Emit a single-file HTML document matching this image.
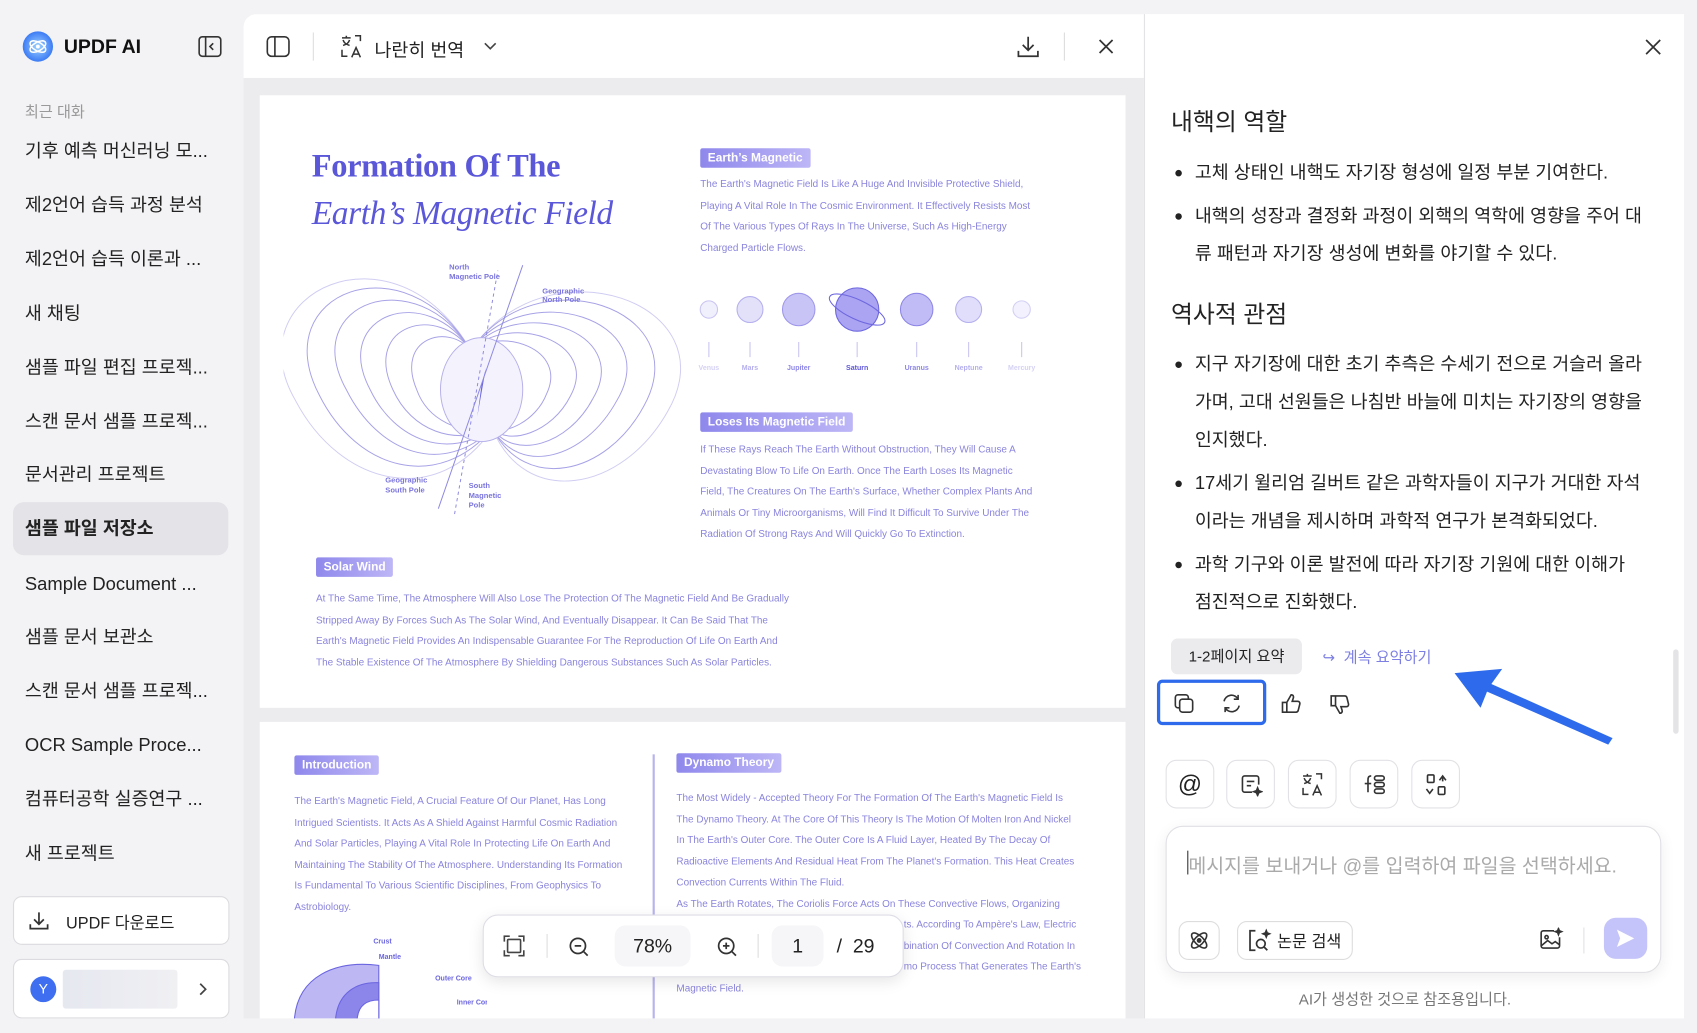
<!DOCTYPE html>
<html><head><meta charset="utf-8">
<style>
*{box-sizing:border-box;margin:0;padding:0}
html,body{width:1697px;height:1032px;overflow:hidden;background:#f3f3f5}
#w{position:absolute;left:0;top:0;width:1568px;height:954px;transform:scale(1.08227);transform-origin:0 0;font-family:"Liberation Sans","Noto Sans CJK KR",sans-serif;color:#222}
.a{position:absolute}
.side-item{position:absolute;left:23px;font-size:17px;color:#222;white-space:nowrap;line-height:20px}
.lbl{position:absolute;background:linear-gradient(90deg,#8f88ec,#bdb6f6);color:#fff;font-size:11px;font-weight:bold;padding:3px 7px;border-radius:2px;white-space:nowrap}
.para{position:absolute;font-size:9.2px;color:#8a84dc;line-height:19.5px;white-space:nowrap}
.rt{position:absolute;left:1082px;font-size:17px;color:#222;line-height:35px;white-space:nowrap}
.h{position:absolute;left:1082px;font-size:22px;color:#222;white-space:nowrap}
.bul{position:absolute;left:1086px;width:6px;height:6px;border-radius:50%;background:#222}
.tb{position:absolute;top:702px;width:45px;height:45px;border:1px solid #e2e2e6;border-radius:10px;background:#fff;display:flex;align-items:center;justify-content:center}
svg{display:block}
</style></head><body><div id="w">

<!-- sidebar -->
<div class="a" style="left:21px;top:29px;width:28px;height:28px;border-radius:50%;background:radial-gradient(circle,#9fd4ff,#3d7cf5 70%);"></div>
<svg class="a" style="left:25px;top:33px" width="20" height="20" viewBox="0 0 20 20"><ellipse cx="10" cy="10" rx="8" ry="4" fill="none" stroke="#fff" stroke-width="1.4" transform="rotate(30 10 10)"/><ellipse cx="10" cy="10" rx="8" ry="4" fill="none" stroke="#fff" stroke-width="1.4" transform="rotate(-30 10 10)"/><circle cx="10" cy="10" r="1.8" fill="#fff"/></svg>
<div class="a" style="left:59px;top:33px;font-size:18px;font-weight:bold;color:#111">UPDF AI</div>
<svg class="a" style="left:183px;top:33px" width="22" height="20" viewBox="0 0 22 20"><rect x="1" y="1" width="20" height="18" rx="3" fill="none" stroke="#333" stroke-width="1.5"/><line x1="7" y1="1" x2="7" y2="19" stroke="#333" stroke-width="1.5"/><path d="M14 7l-3 3 3 3" fill="none" stroke="#333" stroke-width="1.5"/></svg>
<div class="a" style="left:23px;top:93px;font-size:14px;color:#999">최근 대화</div>
<div class="side-item" style="top:130px">기후 예측 머신러닝 모...</div>
<div class="side-item" style="top:180px">제2언어 습득 과정 분석</div>
<div class="side-item" style="top:230px">제2언어 습득 이론과 ...</div>
<div class="side-item" style="top:280px">새 채팅</div>
<div class="side-item" style="top:330px">샘플 파일 편집 프로젝...</div>
<div class="side-item" style="top:380px">스캔 문서 샘플 프로젝...</div>
<div class="side-item" style="top:429px">문서관리 프로젝트</div>
<div class="a" style="left:12px;top:464px;width:199px;height:49px;border-radius:10px;background:#e4e4e8"></div>
<div class="side-item" style="top:479px;font-weight:bold">샘플 파일 저장소</div>
<div class="side-item" style="top:530px">Sample Document ...</div>
<div class="side-item" style="top:579px">샘플 문서 보관소</div>
<div class="side-item" style="top:629px">스캔 문서 샘플 프로젝...</div>
<div class="side-item" style="top:679px">OCR Sample Proce...</div>
<div class="side-item" style="top:729px">컴퓨터공학 실증연구 ...</div>
<div class="side-item" style="top:779px">새 프로젝트</div>
<div class="a" style="left:12px;top:828px;width:200px;height:45px;border:1px solid #dcdce0;border-radius:8px;background:#fff"></div>
<svg class="a" style="left:26px;top:841px" width="20" height="20" viewBox="0 0 20 20" fill="none" stroke="#333" stroke-width="1.6"><path d="M10 2v11M5.5 8.5L10 13l4.5-4.5M2 13v4h16v-4"/></svg>
<div class="a" style="left:61px;top:842px;font-size:15px;color:#222">UPDF 다운로드</div>
<div class="a" style="left:12px;top:886px;width:200px;height:55px;border:1px solid #dcdce0;border-radius:8px;background:#fff"></div>
<div class="a" style="left:28px;top:902px;width:24px;height:24px;border-radius:50%;background:#3f6ff0;color:#fff;font-size:13px;text-align:center;line-height:24px">Y</div>
<div class="a" style="left:58px;top:896px;width:106px;height:36px;background:linear-gradient(90deg,#e6e8f0,#f0f0f3);border-radius:3px"></div>
<svg class="a" style="left:181px;top:907px" width="12" height="14" viewBox="0 0 12 14"><path d="M4 2l5 5-5 5" fill="none" stroke="#444" stroke-width="1.6"/></svg>

<!-- main panel -->
<div class="a" style="left:225px;top:13px;width:832px;height:928px;background:#ececef;border-radius:12px 0 0 0;overflow:hidden">
  <div class="a" style="left:0;top:0;width:832px;height:59px;background:#fff"></div>
</div>
<svg class="a" style="left:246px;top:33px" width="22" height="20" viewBox="0 0 22 20"><rect x="1" y="1" width="20" height="18" rx="4" fill="none" stroke="#333" stroke-width="1.5"/><line x1="8" y1="1" x2="8" y2="19" stroke="#333" stroke-width="1.5"/></svg>
<div class="a" style="left:289px;top:30px;width:1px;height:26px;background:#ddd"></div>
<svg class="a" style="left:314px;top:31px" width="22" height="24" viewBox="0 0 22 24" fill="none" stroke="#333" stroke-width="1.4"><path d="M2 4h8M6 2v2M3 6c1 3 3 4 6 5M9 6c-1 3-3 4-6 5"/><path d="M14 2h5v5M2 15v6h5"/><path d="M11 22l4-9 4 9M12.5 19h5"/></svg>
<div class="a" style="left:346px;top:32px;font-size:17px;color:#222">나란히 번역</div>
<svg class="a" style="left:446px;top:38px" width="14" height="10" viewBox="0 0 14 10"><path d="M2 2l5 5 5-5" fill="none" stroke="#444" stroke-width="1.5"/></svg>
<svg class="a" style="left:939px;top:32px" width="22" height="22" viewBox="0 0 22 22" fill="none" stroke="#333" stroke-width="1.6"><path d="M11 2v12M6 9.5l5 5 5-5M2 15v5h18v-5"/></svg>
<div class="a" style="left:983px;top:30px;width:1px;height:26px;background:#ddd"></div>
<svg class="a" style="left:1014px;top:35px" width="16" height="16" viewBox="0 0 16 16"><path d="M2 2l12 12M14 2L2 14" stroke="#333" stroke-width="1.6"/></svg>

<!-- page 1 -->
<div class="a" style="left:240px;top:88px;width:800px;height:566px;background:#fff"></div>
<div class="a" style="left:288px;top:137px;font-family:'Liberation Serif',serif;font-weight:bold;font-size:30px;color:#5b57d9;white-space:nowrap;letter-spacing:-0.3px">Formation Of The</div>
<div class="a" style="left:288px;top:179px;font-family:'Liberation Serif',serif;font-style:italic;font-size:31px;color:#5b57d9;white-space:nowrap;letter-spacing:-0.4px">Earth’s Magnetic Field</div>
<svg class="a" style="left:262px;top:238px" width="370" height="240" viewBox="0 0 370 240" fill="none" stroke="#a7a2e6" stroke-width="0.9">
<g transform="translate(183,122)">
<path d="M-10-36C-80-160-230-90-172,10C-130,90-40,110,10,36" stroke="#d0cdf2"/>
<path d="M-10-36C-70-140-200-90-150,5C-115,75-40,95,10,36"/>
<path d="M-10-36C-60-120-170-80-125,0C-95,60-35,80,10,36"/>
<path d="M-10-36C-50-100-140-70-103,0C-80,48-30,65,10,36"/>
<path d="M-10-36C-40-80-110-60-82,0C-65,38-25,52,10,36"/>
<path d="M-10-36C-30-62-80-48-60,0C-50,28-20,42,10,36"/>
<path d="M-10-36C60-140,230-80,172,20C130,95,40,110,10,36" stroke="#d0cdf2"/>
<path d="M-10-36C50-125,200-75,150,15C115,80,40,95,10,36"/>
<path d="M-10-36C40-105,170-65,125,10C95,65,35,80,10,36"/>
<path d="M-10-36C32-88,140-55,103,8C80,52,30,65,10,36"/>
<path d="M-10-36C25-72,110-45,82,6C65,40,25,52,10,36"/>
<path d="M-10-36C18-58,80-38,60,4C50,30,20,42,10,36"/>
<ellipse cx="0" cy="0" rx="38" ry="48" fill="#f3f2fd" stroke="#b5b0ea"/>
<path d="M4-20L-4 25L0 -5Z" fill="#6b65e0" stroke="none"/>
<line x1="-40" y1="110" x2="38" y2="-115" stroke="#8d88e0"/>
<line x1="-25" y1="115" x2="15" y2="-110" stroke="#8d88e0" stroke-dasharray="3 3"/>
</g>
<text x="153" y="11" font-size="7" fill="#7b75dd" stroke="none" font-family="Liberation Sans" font-weight="bold">North</text>
<text x="153" y="20" font-size="7" fill="#7b75dd" stroke="none" font-family="Liberation Sans" font-weight="bold">Magnetic Pole</text>
<text x="239" y="33" font-size="7" fill="#7b75dd" stroke="none" font-family="Liberation Sans" font-weight="bold">Geographic</text>
<text x="239" y="41" font-size="7" fill="#7b75dd" stroke="none" font-family="Liberation Sans" font-weight="bold">North Pole</text>
<text x="94" y="208" font-size="7" fill="#7b75dd" stroke="none" font-family="Liberation Sans" font-weight="bold">Geographic</text>
<text x="94" y="217" font-size="7" fill="#7b75dd" stroke="none" font-family="Liberation Sans" font-weight="bold">South Pole</text>
<text x="171" y="213" font-size="7" fill="#7b75dd" stroke="none" font-family="Liberation Sans" font-weight="bold">South</text>
<text x="171" y="222" font-size="7" fill="#7b75dd" stroke="none" font-family="Liberation Sans" font-weight="bold">Magnetic</text>
<text x="171" y="231" font-size="7" fill="#7b75dd" stroke="none" font-family="Liberation Sans" font-weight="bold">Pole</text>
</svg>
<div class="lbl" style="left:647px;top:137px">Earth’s Magnetic</div>
<div class="para" style="left:647px;top:161px">The Earth's Magnetic Field Is Like A Huge And Invisible Protective Shield,<br>Playing A Vital Role In The Cosmic Environment. It Effectively Resists Most<br>Of The Various Types Of Rays In The Universe, Such As High-Energy<br>Charged Particle Flows.</div>
<svg class="a" style="left:640px;top:262px" width="330" height="90" viewBox="0 0 330 90" font-family="Liberation Sans" font-size="6.5" font-weight="bold">
<circle cx="15" cy="24" r="8" fill="#f0effc" stroke="#c9c5f2"/>
<circle cx="53" cy="24" r="12" fill="#e3e1fa" stroke="#b5b0ee"/>
<circle cx="98" cy="24" r="15" fill="#c8c4f6" stroke="#9f98ea"/>
<circle cx="152" cy="24" r="20" fill="#aaa4f2" stroke="#6e67df"/>
<ellipse cx="152" cy="24" rx="28" ry="9" fill="none" stroke="#6e67df" transform="rotate(25 152 24)"/>
<circle cx="207" cy="24" r="15" fill="#c1bcf5" stroke="#8e87e6"/>
<circle cx="255" cy="24" r="12" fill="#e0defa" stroke="#b5b0ee"/>
<circle cx="304" cy="24" r="8" fill="#f2f1fd" stroke="#d3d0f4"/>
<g stroke="#c9c5f0"><line x1="15" y1="54" x2="15" y2="68"/><line x1="53" y1="54" x2="53" y2="68"/><line x1="98" y1="54" x2="98" y2="68"/><line x1="152" y1="54" x2="152" y2="68"/><line x1="207" y1="54" x2="207" y2="68"/><line x1="255" y1="54" x2="255" y2="68"/><line x1="304" y1="54" x2="304" y2="68"/></g>
<g text-anchor="middle"><text x="15" y="80" fill="#d5d2f4">Venus</text><text x="53" y="80" fill="#b5b0ee">Mars</text><text x="98" y="80" fill="#8e87e6">Jupiter</text><text x="152" y="80" fill="#5d56d8">Saturn</text><text x="207" y="80" fill="#8e87e6">Uranus</text><text x="255" y="80" fill="#b5b0ee">Neptune</text><text x="304" y="80" fill="#d5d2f4">Mercury</text></g>
</svg>
<div class="lbl" style="left:647px;top:381px">Loses Its Magnetic Field</div>
<div class="para" style="left:647px;top:406px">If These Rays Reach The Earth Without Obstruction, They Will Cause A<br>Devastating Blow To Life On Earth. Once The Earth Loses Its Magnetic<br>Field, The Creatures On The Earth's Surface, Whether Complex Plants And<br>Animals Or Tiny Microorganisms, Will Find It Difficult To Survive Under The<br>Radiation Of Strong Rays And Will Quickly Go To Extinction.</div>
<div class="lbl" style="left:292px;top:515px">Solar Wind</div>
<div class="para" style="left:292px;top:544px">At The Same Time, The Atmosphere Will Also Lose The Protection Of The Magnetic Field And Be Gradually<br>Stripped Away By Forces Such As The Solar Wind, And Eventually Disappear. It Can Be Said That The<br>Earth's Magnetic Field Provides An Indispensable Guarantee For The Reproduction Of Life On Earth And<br>The Stable Existence Of The Atmosphere By Shielding Dangerous Substances Such As Solar Particles.</div>

<!-- page 2 -->
<div class="a" style="left:240px;top:667px;width:800px;height:274px;background:#fff;overflow:hidden">
  <div class="a" style="left:363px;top:30px;width:1.5px;height:260px;background:#b8b3ee"></div>
  <svg class="a" style="left:30px;top:195px" width="180" height="90" viewBox="0 0 180 90" font-family="Liberation Sans" font-size="6.5" font-weight="bold" fill="#6b65e0">
   <path d="M2 80C5 40 40 25 80 30L80 80Z" fill="#bdb8f4" stroke="#6b65e0"/>
   <path d="M40 80C42 55 60 45 80 46L80 80Z" fill="#8c85ea" stroke="#6b65e0"/>
   <path d="M60 80C61 66 70 62 80 62L80 80Z" fill="#fff" stroke="#6b65e0"/>
   <text x="75" y="10">Crust</text><text x="80" y="24">Mantle</text><text x="132" y="44">Outer Core</text><text x="152" y="66">Inner Core</text>
  </svg>
</div>
<div class="lbl" style="left:272px;top:698px">Introduction</div>
<div class="para" style="left:272px;top:731px">The Earth's Magnetic Field, A Crucial Feature Of Our Planet, Has Long<br>Intrigued Scientists. It Acts As A Shield Against Harmful Cosmic Radiation<br>And Solar Particles, Playing A Vital Role In Protecting Life On Earth And<br>Maintaining The Stability Of The Atmosphere. Understanding Its Formation<br>Is Fundamental To Various Scientific Disciplines, From Geophysics To<br>Astrobiology.</div>
<div class="lbl" style="left:625px;top:696px">Dynamo Theory</div>
<div class="para" style="left:625px;top:728px">The Most Widely - Accepted Theory For The Formation Of The Earth's Magnetic Field Is<br>The Dynamo Theory. At The Core Of This Theory Is The Motion Of Molten Iron And Nickel<br>In The Earth's Outer Core. The Outer Core Is A Fluid Layer, Heated By The Decay Of<br>Radioactive Elements And Residual Heat From The Planet's Formation. This Heat Creates<br>Convection Currents Within The Fluid.<br>As The Earth Rotates, The Coriolis Force Acts On These Convective Flows, Organizing<br>&nbsp;<br>&nbsp;<br>&nbsp;<br>Magnetic Field.</div>
<div class="para" style="left:835px;top:845px">ts. According To Ampère's Law, Electric<br>bination Of Convection And Rotation In<br>mo Process That Generates The Earth's</div>

<!-- zoom bar -->
<div class="a" style="left:446px;top:845px;width:389px;height:58px;background:#fff;border:1px solid #dedde6;border-radius:14px;box-shadow:0 4px 14px rgba(0,0,0,.1)"></div>
<svg class="a" style="left:465px;top:864px" width="20" height="20" viewBox="0 0 20 20" fill="none" stroke="#444" stroke-width="1.5"><rect x="4" y="4" width="12" height="12" rx="1"/><path d="M1 6V1h5M14 1h5v5M19 14v5h-5M6 19H1v-5"/></svg>
<div class="a" style="left:505px;top:863px;width:1px;height:22px;background:#ddd"></div>
<svg class="a" style="left:525px;top:865px" width="20" height="20" viewBox="0 0 20 20" fill="none" stroke="#333" stroke-width="1.6"><circle cx="9" cy="9" r="7"/><path d="M6 9h6M14 14l4 4"/></svg>
<div class="a" style="left:568px;top:855px;width:70px;height:38px;border-radius:10px;background:#f6f6f8;font-size:18px;text-align:center;line-height:38px;color:#222">78%</div>
<svg class="a" style="left:662px;top:865px" width="20" height="20" viewBox="0 0 20 20" fill="none" stroke="#333" stroke-width="1.6"><circle cx="9" cy="9" r="7"/><path d="M6 9h6M9 6v6M14 14l4 4"/></svg>
<div class="a" style="left:700px;top:863px;width:1px;height:22px;background:#ddd"></div>
<div class="a" style="left:713px;top:855px;width:48px;height:38px;border-radius:10px;background:#f6f6f8;font-size:18px;text-align:center;line-height:38px;color:#222">1</div>
<div class="a" style="left:773px;top:864px;font-size:18px;color:#222;white-space:nowrap">/&nbsp; 29</div>

<!-- right panel -->
<div class="a" style="left:1057px;top:13px;width:499px;height:928px;background:#fff;border-left:1px solid #e3e3e6"></div>
<svg class="a" style="left:1520px;top:36px" width="15" height="15" viewBox="0 0 15 15"><path d="M1 1l13 13M14 1L1 14" stroke="#333" stroke-width="1.6"/></svg>
<div class="a" style="left:1546px;top:600px;width:5px;height:78px;border-radius:3px;background:#e4e4e7"></div>
<div class="h" style="top:95px">내핵의 역할</div>
<div class="bul" style="top:157px"></div><div class="rt" style="left:1104px;top:142px">고체 상태인 내핵도 자기장 형성에 일정 부분 기여한다.</div>
<div class="bul" style="top:197px"></div><div class="rt" style="left:1104px;top:182px">내핵의 성장과 결정화 과정이 외핵의 역학에 영향을 주어 대<br>류 패턴과 자기장 생성에 변화를 야기할 수 있다.</div>
<div class="h" style="top:273px">역사적 관점</div>
<div class="bul" style="top:334px"></div><div class="rt" style="left:1104px;top:319px">지구 자기장에 대한 초기 추측은 수세기 전으로 거슬러 올라<br>가며, 고대 선원들은 나침반 바늘에 미치는 자기장의 영향을<br>인지했다.</div>
<div class="bul" style="top:444px"></div><div class="rt" style="left:1104px;top:429px">17세기 윌리엄 길버트 같은 과학자들이 지구가 거대한 자석<br>이라는 개념을 제시하며 과학적 연구가 본격화되었다.</div>
<div class="bul" style="top:519px"></div><div class="rt" style="left:1104px;top:504px">과학 기구와 이론 발전에 따라 자기장 기원에 대한 이해가<br>점진적으로 진화했다.</div>
<div class="a" style="left:1082px;top:590px;width:121px;height:33px;border-radius:6px;background:#ebebee;font-size:14px;text-align:center;line-height:33px;color:#222">1-2페이지 요약</div>
<div class="a" style="left:1222px;top:597px;font-size:14px;color:#7d7fe2;white-space:nowrap">↪ &nbsp;계속 요약하기</div>
<div class="a" style="left:1069px;top:628px;width:101px;height:42px;border:3.5px solid #2e6bec;border-radius:5px"></div>
<svg class="a" style="left:1084px;top:640px" width="20" height="20" viewBox="0 0 20 20" fill="none" stroke="#333" stroke-width="1.5"><rect x="6" y="6" width="12" height="12" rx="2.5"/><path d="M14 6V4.5A2.5 2.5 0 0 0 11.5 2h-7A2.5 2.5 0 0 0 2 4.5v7A2.5 2.5 0 0 0 4.5 14H6"/></svg>
<svg class="a" style="left:1128px;top:640px" width="20" height="20" viewBox="0 0 20 20" fill="none" stroke="#333" stroke-width="1.5"><path d="M3 8a7 7 0 0 1 13-2M17 12a7 7 0 0 1-13 2"/><path d="M16 2v4h-4M4 18v-4h4"/></svg>
<svg class="a" style="left:1183px;top:640px" width="20" height="20" viewBox="0 0 20 20" fill="none" stroke="#333" stroke-width="1.5"><path d="M2 9h4v9H2zM6 9l4-7c2 0 2.5 1.5 2 3l-1 3h5c1.5 0 2.3 1.2 2 2.5l-1.5 6c-.3 1-1 1.5-2 1.5H6"/></svg>
<svg class="a" style="left:1228px;top:641px" width="20" height="20" viewBox="0 0 20 20" fill="none" stroke="#333" stroke-width="1.5"><path d="M2 2h4v9H2zM6 11l4 7c2 0 2.5-1.5 2-3l-1-3h5c1.5 0 2.3-1.2 2-2.5l-1.5-6C16.2 2.5 15.5 2 14.5 2H6"/></svg>
<svg class="a" style="left:1340px;top:612px" width="155" height="80" viewBox="0 0 155 80"><path d="M4 10L48 6L38 20L150 70L146 76L34 27L28 42Z" fill="#2e6bec"/></svg>

<div class="tb" style="left:1077px"><span style="font-size:22px;color:#222">@</span></div>
<div class="tb" style="left:1133px"><svg width="22" height="22" viewBox="0 0 22 22" fill="none" stroke="#333" stroke-width="1.5"><path d="M12 18H5a2 2 0 0 1-2-2V5a2 2 0 0 1 2-2h11a2 2 0 0 1 2 2v6"/><path d="M7 8h7M7 12h4"/><path d="M17 14l1 2.5 2.5 1-2.5 1-1 2.5-1-2.5-2.5-1 2.5-1z" fill="#333"/></svg></div>
<div class="tb" style="left:1190px"><svg width="22" height="24" viewBox="0 0 22 24" fill="none" stroke="#333" stroke-width="1.4"><path d="M2 4h8M6 2v2M3 6c1 3 3 4 6 5M9 6c-1 3-3 4-6 5"/><path d="M14 2h5v5M2 15v6h5"/><path d="M11 22l4-9 4 9M12.5 19h5"/></svg></div>
<div class="tb" style="left:1247px"><svg width="22" height="22" viewBox="0 0 22 22" fill="none" stroke="#333" stroke-width="1.5"><path d="M8 3C5 3 5 5 5 7v11M2 10h6"/><rect x="11" y="3" width="9" height="4" rx="2"/><rect x="11" y="9" width="9" height="4" rx="2"/><rect x="11" y="15" width="9" height="4" rx="2"/></svg></div>
<div class="tb" style="left:1304px"><svg width="22" height="22" viewBox="0 0 22 22" fill="none" stroke="#333" stroke-width="1.5"><rect x="3" y="2" width="6" height="7" rx="1"/><rect x="13" y="13" width="6" height="7" rx="1"/><path d="M14 7l3-4 3 4M17 3v5M8 15l-3 4-3-4"/></svg></div>

<div class="a" style="left:1077px;top:763px;width:458px;height:136px;border:1px solid #e0e0e5;border-radius:16px;background:#fff;box-shadow:0 4px 14px rgba(0,0,0,.07)"></div>
<div class="a" style="left:1097px;top:786px;width:1px;height:22px;background:#333"></div>
<div class="a" style="left:1098px;top:786px;font-size:18px;color:#aaa;white-space:nowrap">메시지를 보내거나 @를 입력하여 파일을 선택하세요.</div>
<div class="a" style="left:1089px;top:851px;width:38px;height:36px;border:1px solid #ddd;border-radius:9px;display:flex;align-items:center;justify-content:center"><svg width="22" height="22" viewBox="0 0 22 22" fill="none" stroke="#333" stroke-width="1.5"><ellipse cx="11" cy="11" rx="9" ry="4" transform="rotate(45 11 11)"/><ellipse cx="11" cy="11" rx="9" ry="4" transform="rotate(-45 11 11)"/><circle cx="11" cy="11" r="1.5" fill="#333"/></svg></div>
<div class="a" style="left:1143px;top:851px;width:107px;height:36px;border:1px solid #ddd;border-radius:9px"></div>
<svg class="a" style="left:1152px;top:858px" width="24" height="22" viewBox="0 0 24 22" fill="none" stroke="#333" stroke-width="1.6"><path d="M8 2H3v18h5"/><circle cx="13" cy="14" r="4"/><path d="M16 17l3 3"/><path d="M18 2l.8 2 2 .8-2 .8-.8 2-.8-2-2-.8 2-.8z" fill="#333"/></svg>
<div class="a" style="left:1180px;top:859px;font-size:15px;color:#222;white-space:nowrap">논문 검색</div>
<svg class="a" style="left:1421px;top:857px" width="24" height="22" viewBox="0 0 24 22" fill="none" stroke="#333" stroke-width="1.5"><path d="M15 3H5a2 2 0 0 0-2 2v12a2 2 0 0 0 2 2h13a2 2 0 0 0 2-2V9"/><circle cx="8" cy="9" r="1.5"/><path d="M3 17l6-5 4 3 3-2 4 3"/><path d="M19 1l.8 2 2 .8-2 .8-.8 2-.8-2-2-.8 2-.8z" fill="#333"/></svg>
<div class="a" style="left:1463px;top:857px;width:1px;height:24px;background:#e2e2e6"></div>
<div class="a" style="left:1482px;top:848px;width:40px;height:38px;border-radius:11px;background:#c5c4fa"></div>
<svg class="a" style="left:1492px;top:857px" width="20" height="20" viewBox="0 0 20 20"><path d="M2 2L18 10L2 18L5 10Z" fill="#fff"/></svg>
<div class="a" style="left:1200px;top:913px;font-size:14px;color:#777;white-space:nowrap">AI가 생성한 것으로 참조용입니다.</div>

</div></body></html>
